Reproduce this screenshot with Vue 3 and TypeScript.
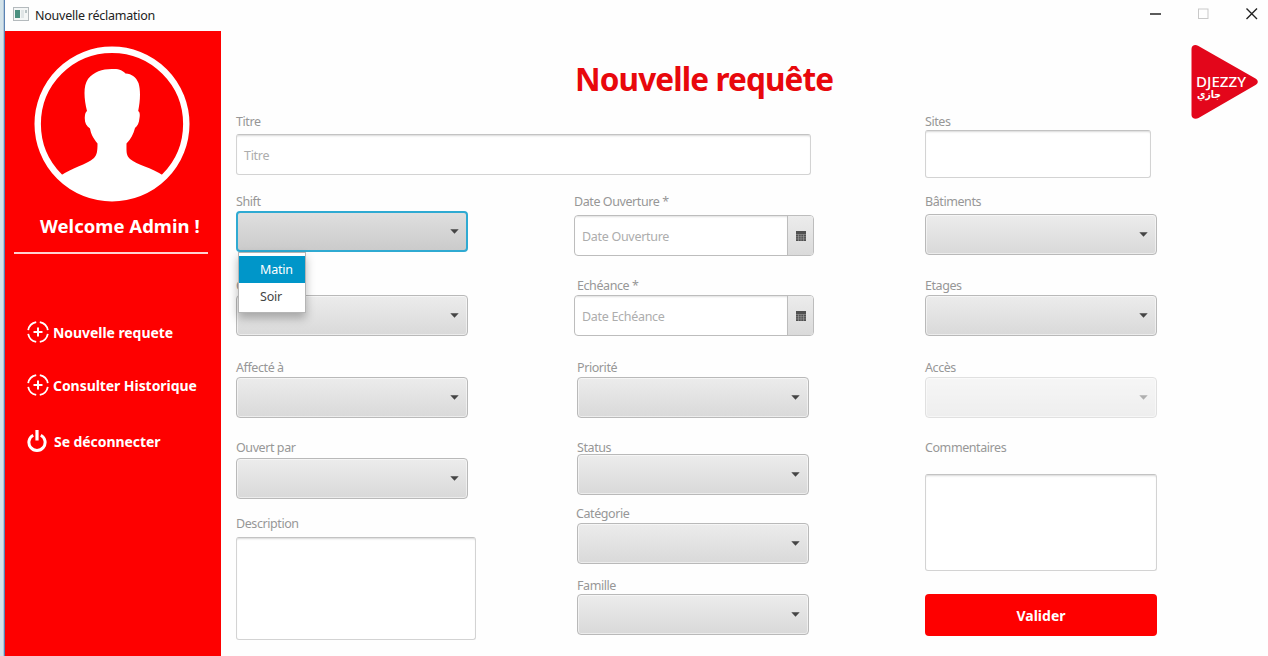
<script setup lang="ts">
interface Field {
  id: string
  label: string
  kind: 'select' | 'text' | 'date'
  placeholder?: string
  state?: 'open' | 'disabled'
}

const shifts = ['Matin', 'Soir']

const general: Field[] = [
  { id: 'shift', label: 'Shift', kind: 'select', state: 'open' },
  { id: 'kind', label: 'C', kind: 'select' },
  { id: 'assignee', label: 'Affecté à', kind: 'select' },
  { id: 'opener', label: 'Ouvert par', kind: 'select' },
  { id: 'description', label: 'Description', kind: 'text' },
]

const tracking: Field[] = [
  { id: 'opened', label: 'Date Ouverture *', kind: 'date', placeholder: 'Date Ouverture' },
  { id: 'due', label: 'Echéance *', kind: 'date', placeholder: 'Date Echéance' },
  { id: 'priority', label: 'Priorité', kind: 'select' },
  { id: 'status', label: 'Status', kind: 'select' },
  { id: 'category', label: 'Catégorie', kind: 'select' },
  { id: 'family', label: 'Famille', kind: 'select' },
]

const location: Field[] = [
  { id: 'sites', label: 'Sites', kind: 'text' },
  { id: 'buildings', label: 'Bâtiments', kind: 'select' },
  { id: 'floors', label: 'Etages', kind: 'select' },
  { id: 'access', label: 'Accès', kind: 'select', state: 'disabled' },
  { id: 'comments', label: 'Commentaires', kind: 'text' },
]

const columns = [
  { name: 'general', fields: general },
  { name: 'tracking', fields: tracking },
  { name: 'location', fields: location },
]

const menu = [
  { id: 'new', label: 'Nouvelle requete', icon: 'plus' },
  { id: 'history', label: 'Consulter Historique', icon: 'plus' },
  { id: 'logout', label: 'Se déconnecter', icon: 'power' },
]
</script>

<template>
  <div class="window">
    <div class="edge"></div>
    <div class="frame">
      <header class="titlebar">
        <svg class="app-icon" width="16" height="14" viewBox="0 0 16 14">
          <rect x="0.5" y="0.5" width="15" height="13" fill="#f4f6f6" stroke="#b4babd" />
          <rect x="2" y="3" width="5" height="8" fill="#4b9080" />
          <rect x="8" y="3" width="3" height="8" fill="#e0e5e6" />
          <rect x="12" y="3" width="2" height="3" fill="#b9c4c5" />
        </svg>
        <span class="caption">Nouvelle réclamation</span>
        <svg class="controls" width="110" height="14" viewBox="0 0 110 14">
          <path d="M0 7H11" stroke="#333" stroke-width="1.6" />
          <rect x="48.5" y="2" width="9.5" height="9.5" fill="none" stroke="#c9c9c9" />
          <path d="M96.500 1.500L107 12M107 1.500L96.500 12" stroke="#222" stroke-width="1.4" />
        </svg>
      </header>
      <div class="body">
        <aside class="sidebar">
          <svg class="avatar" width="156" height="156" viewBox="0 0 156 156">
            <circle cx="78" cy="78" r="74.300" fill="none" stroke="#fff" stroke-width="6.400" />
            <path
              fill="#fff"
              d="M26 130C39 121 52 119 60 112C63 109 63.500 105 63.500 97.500C59 92 57 88 56 82.500C52 80 50.500 76 50.800 71C51 68 51.500 66 53 65C50 53 49 40 54 33C60 25 70 22.500 80 23C86 23 89 25 91.500 27.500C98 28 102 31 104.500 37C107 45 106 56 104.200 65C106 66 106 69 105.500 72C105 77 103.500 80 101 82C99.500 88 97 93 92.500 97.500C92.500 106 92 109 96 113C103 119 117 121 130 130A74 74 0 0 1 26 130Z"
            />
          </svg>
          <div class="welcome">Welcome Admin !</div>
          <hr class="rule" />
          <nav class="menu">
            <a v-for="item in menu" :key="item.id" class="menu-item" :class="item.id">
              <svg v-if="item.icon === 'plus'" class="menu-icon" width="22" height="22" viewBox="0 0 22 22" fill="none" stroke="#fff">
                <path
                  stroke-width="1.8"
                  d="M12.800 1.200A10 10 0 0 1 20.800 9.200M20.800 12.800A10 10 0 0 1 12.800 20.800M9.200 20.800A10 10 0 0 1 1.200 12.800M1.200 9.200A10 10 0 0 1 9.200 1.200"
                />
                <path stroke-width="2" d="M11 6.500V15.500M6.500 11H15.500" />
              </svg>
              <svg v-else class="menu-icon" width="22" height="24" viewBox="0 0 22 24" fill="none" stroke="#fff">
                <path stroke-width="3" d="M6.200 6.200A8.100 8.100 0 1 0 13.800 6.200" />
                <path stroke-width="3.200" d="M10 1V11.500" />
              </svg>
              <span>{{ item.label }}</span>
            </a>
          </nav>
        </aside>
        <main class="main">
          <div class="masthead">
            <h1 class="heading">Nouvelle requête</h1>
            <svg class="logo" width="68" height="76" viewBox="0 0 68 76">
              <path fill="#e3061b" d="M0.500 5C0.500 1.500 4 0 7 1.800L64.500 34.500C67.500 36.300 67.500 39.300 64.500 41L7.500 74C4 76 0.500 74 0.500 71Z" />
              <text class="brand" x="5" y="43.200" textLength="50" lengthAdjust="spacingAndGlyphs">DJEZZY</text>
              <text class="brand-ar" x="6" y="54" textLength="24" lengthAdjust="spacingAndGlyphs">جازي</text>
            </svg>
          </div>
          <form class="form">
            <div class="field title-field">
              <label class="label">Titre</label>
              <div class="text-box">Titre</div>
            </div>
            <section v-for="column in columns" :key="column.name" class="column" :class="column.name">
              <div v-for="field in column.fields" :key="field.id" class="field" :class="field.id">
                <label class="label">{{ field.label }}</label>
                <div v-if="field.kind === 'select'" class="select" :class="field.state">
                  <svg width="9" height="5" viewBox="0 0 9 5"><path d="M0.300 0.300H8.700L4.500 4.800Z" fill="#454545" /></svg>
                  <ul v-if="field.state === 'open'" class="popup">
                    <li v-for="(shift, i) in shifts" :key="shift" class="option" :class="{ active: i === 0 }">{{ shift }}</li>
                  </ul>
                </div>
                <div v-else-if="field.kind === 'date'" class="date">
                  <span class="date-text">{{ field.placeholder }}</span>
                  <span class="date-button">
                    <svg width="10" height="10" viewBox="0 0 10 10">
                      <rect width="10" height="10" fill="#505050" />
                      <path d="M0 3.500H10M0 5.700H10M0 7.900H10M2.500 3.500V10M5 3.500V10M7.500 3.500V10" stroke="#aaa" stroke-width="0.500" />
                    </svg>
                  </span>
                </div>
                <div v-else class="text-box"></div>
              </div>
              <button v-if="column.name === 'location'" type="button" class="submit">Valider</button>
            </section>
          </form>
        </main>
      </div>
    </div>
  </div>
</template>

<style>
body {
  margin: 0;
  overflow: hidden;
}
</style>

<style scoped>
* {
  box-sizing: border-box;
}
.window {
  display: flex;
  width: 1268px;
  height: 656px;
  overflow: hidden;
  background: #fefefe;
  font-family: 'Noto Sans', 'Open Sans', sans-serif;
  font-size: 13px;
}
.edge {
  width: 5px;
  background: linear-gradient(90deg, #d3e3ea 0 3px, #b3c7d8 3px 4px, #5a83b4 4px 5px);
}
.frame {
  flex: 1;
  display: flex;
  flex-direction: column;
}
.titlebar {
  height: 31px;
  display: flex;
  align-items: center;
  padding: 0 8px 3px;
}
.caption {
  margin: 2px 0 0 6px;
  font-size: 12.5px;
  letter-spacing: -0.24px;
  color: #222;
}
.controls {
  margin-left: auto;
}
.body {
  flex: 1;
  display: flex;
}
.sidebar {
  width: 216px;
  background: #fe0000;
  color: #fff;
  display: flex;
  flex-direction: column;
  font-weight: 700;
}
.avatar {
  margin: 15px 0 0 29px;
}
.welcome {
  margin: 10px 0 0 35px;
  height: 28px;
  line-height: 28px;
  font-size: 18.5px;
  letter-spacing: 0.03px;
  white-space: nowrap;
}
.rule {
  width: 194px;
  height: 2px;
  margin: 12px 0 0 9px;
  border: 0;
  background: #ffd0d0;
}
.menu {
  display: flex;
  flex-direction: column;
  padding: 65px 0 0 22px;
}
.menu-item {
  display: flex;
  align-items: center;
  height: 26px;
  font-size: 14px;
  letter-spacing: -0.06px;
  white-space: nowrap;
}
.menu-item span {
  margin-left: 4px;
}
.history {
  margin-top: 27px;
}
.logout {
  margin-top: 30px;
}
.logout span {
  margin-left: 5px;
}
.main {
  flex: 1;
  display: flex;
  flex-direction: column;
}
.masthead {
  height: 82px;
  display: flex;
  padding: 13px 9px 0 354px;
  justify-content: space-between;
}
.heading {
  margin: 13px 0 0;
  font-size: 31.5px;
  line-height: 44px;
  letter-spacing: -0.88px;
  font-weight: 700;
  color: #e8080c;
  white-space: nowrap;
}
.logo {
  overflow: visible;
}
.brand {
  font: 500 14px 'Noto Sans', sans-serif;
  fill: #fff;
}
.brand-ar {
  font: 700 10.5px 'DejaVu Sans', sans-serif;
  fill: #fff;
}
.form {
  display: grid;
  grid-template-columns: 338px 351px 232px;
  grid-template-rows: 81px 1fr;
  padding-left: 15px;
}
.title-field {
  grid-column: 1 / 3;
  width: 575px;
}
.location {
  grid-column: 3;
  grid-row: 1 / 3;
}
.general,
.tracking {
  grid-row: 2;
}
.general {
  grid-column: 1;
}
.tracking {
  grid-column: 2;
}
.column {
  display: grid;
  align-content: start;
}
.general {
  width: 232px;
  grid-template-rows: 84px 81px 81px 75px 126px;
}
.tracking {
  width: 235px;
  grid-template-rows: 84px 81px 81px 66px 72px 60px;
}
.location {
  grid-template-rows: 81px 84px 81px 81px 154px 42px;
}
.field {
  display: flex;
  flex-direction: column;
  gap: 3px;
}
.label {
  height: 15px;
  line-height: 15px;
  color: #979797;
  font-size: 12.5px;
  letter-spacing: -0.42px;
  white-space: nowrap;
}
.select {
  position: relative;
  width: 232px;
  height: 41px;
  flex: none;
  display: flex;
  align-items: center;
  justify-content: flex-end;
  padding-right: 8px;
  border: 1px solid #b9b9b9;
  border-radius: 4px;
  background: linear-gradient(#ececec, #d9d9d9);
  box-shadow: inset 0 0 0 1px rgba(255, 255, 255, 0.5);
}
.select.open {
  border: 2px solid #2faad2;
  padding-right: 7px;
  background: linear-gradient(#dfdfdf, #cbcbcb);
  box-shadow: none;
}
.select.disabled {
  opacity: 0.42;
}
.text-box {
  height: 41px;
  flex: none;
  padding-left: 8px;
  line-height: 41px;
  border: 1px solid #d3d3d3;
  border-top-color: #c3c3c3;
  border-radius: 3px;
  background: #fff;
  box-shadow: inset 0 2px 2px -1px #d8d8d8;
  color: #adadad;
  font-size: 12.5px;
  letter-spacing: -0.3px;
}
.date {
  display: flex;
  flex: none;
  width: 240px;
  height: 41px;
  border: 1px solid #bdbdbd;
  border-radius: 4px;
  background: #fff;
  overflow: hidden;
}
.date-text {
  flex: 1;
  padding-left: 7px;
  line-height: 41px;
  font-size: 12.5px;
  letter-spacing: -0.3px;
  color: #adadad;
  box-shadow: inset 0 2px 2px -1px #e0e0e0;
}
.date-button {
  width: 26px;
  display: flex;
  align-items: center;
  justify-content: center;
  border-left: 1px solid #bdbdbd;
  background: linear-gradient(#ececec, #dadada);
}
.title-field {
  gap: 5px;
}
.title-field .label,
.sites .label,
.assignee .label,
.priority .label,
.access .label,
.description .label {
  margin-top: 1px;
}
.title-field .text-box {
  padding-left: 7px;
}
.opened {
  gap: 6px;
}
.assignee,
.priority,
.access {
  gap: 2px;
}
.due .label,
.priority,
.status,
.family {
  margin-left: 3px;
}
.category .label {
  margin-left: 2px;
}
.category .select {
  margin-left: 3px;
}
.shift,
.kind,
.due,
.floors,
.category {
  gap: 2px;
}
.status {
  gap: 0;
}
.status .select {
  margin-top: -1px;
}
.family {
  gap: 1px;
}
.sites {
  gap: 1px;
}
.sites .text-box {
  width: 226px;
  height: 48px;
}
.buildings {
  gap: 5px;
}
.description {
  width: 240px;
  gap: 6px;
}
.description .text-box {
  height: 103px;
}
.comments {
  gap: 19px;
}
.comments .text-box {
  height: 97px;
}
.popup {
  position: absolute;
  z-index: 2;
  left: 0;
  top: 39px;
  width: 68px;
  height: 61px;
  margin: 0;
  padding: 3px 0 0;
  list-style: none;
  background: #fff;
  border: 1px solid #b5b5b5;
  box-shadow: 0 5px 9px rgba(0, 0, 0, 0.28);
}
.option {
  height: 27px;
  line-height: 27px;
  padding-left: 21px;
  font-size: 12.5px;
  letter-spacing: -0.2px;
  color: #444;
}
.option.active {
  background: #0096c9;
  color: #fff;
}
.submit {
  height: 42px;
  padding: 0;
  border: 0;
  border-radius: 4px;
  background: #fe0000;
  color: #fff;
  font: 700 14px 'Noto Sans', sans-serif;
}
</style>
